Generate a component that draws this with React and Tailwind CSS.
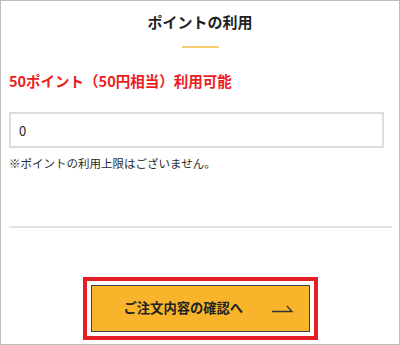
import React from "react";

export default function App() {
  return (
    <div
      className="w-[400px] h-[345px] border border-[#bcbcbc] bg-white flex flex-col"
      style={{ fontFamily: '"Noto Sans CJK JP", "Noto Sans", sans-serif' }}
    >
      <h1 className="mt-[10px] text-center text-[15px] leading-[22px] font-bold text-[#222]">
        ポイントの利用
      </h1>
      <div className="mt-[13px] mx-auto w-[37px] h-[2px] bg-[#f9cd72]" />
      <p className="mt-[23px] px-[8px] text-[14.5px] leading-[20px] font-bold text-[#ee1c1c]">
        50ポイント（50円相当）利用可能
      </p>
      <div className="mt-[21px] px-[8px] pr-[15px]">
        <input
          readOnly
          value="0"
          className="w-full h-[36px] border-2 border-[#dcdcdc] px-[8px] text-[13px] text-[#222] outline-none"
          style={{ fontFamily: '"Noto Sans CJK JP", sans-serif' }}
        />
      </div>
      <p className="mt-[7px] px-[8px] text-[11.5px] leading-[16px] text-[#2a2a2a]">
        ※ポイントの利用上限はございません。
      </p>
      <div className="mt-[55px] ml-[8px] mr-[7px] h-[1.5px] bg-[#e2e2e2]" />
      <div className="mt-[49px] mx-auto w-[235px] h-[63px] border-4 border-[#e41e26] p-[4px] bg-white">
        <div className="w-full h-full bg-[#f8b52c] border-[1.5px] border-[#3d4250] flex items-center pl-[32px] pr-[16px]">
          <span className="text-[13.3px] font-bold text-[#222] leading-none">
            ご注文内容の確認へ
          </span>
          <svg className="ml-auto" width="21" height="9" viewBox="0 0 21 9" fill="none">
            <path d="M0 7.5H20L15 2" stroke="#333" strokeWidth="1.3" />
          </svg>
        </div>
      </div>
    </div>
  );
}
